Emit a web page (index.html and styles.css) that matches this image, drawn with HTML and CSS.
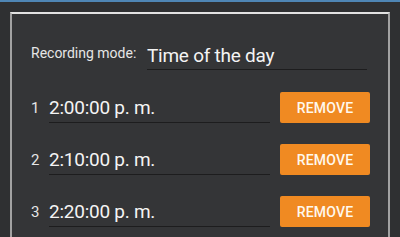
FILE: index.html
```html
<!DOCTYPE html>
<html lang="en">
<head>
  <meta charset="UTF-8">
  <title>Recording schedule</title>
  <link rel="stylesheet" href="styles.css">
</head>
<body>

<div class="topbar"></div>

<div class="container">
  <div class="card">
    <div class="mode-row">
      <span class="mode-label">Recording mode:</span>
      <div class="field mode-field">Time of the day</div>
    </div>

    <div class="time-row">
      <span class="num">1</span>
      <div class="field">2:00:00 p. m.</div>
      <button class="remove">REMOVE</button>
    </div>

    <div class="time-row">
      <span class="num">2</span>
      <div class="field">2:10:00 p. m.</div>
      <button class="remove">REMOVE</button>
    </div>

    <div class="time-row">
      <span class="num">3</span>
      <div class="field">2:20:00 p. m.</div>
      <button class="remove">REMOVE</button>
    </div>
  </div>
</div>

</body>
</html>
```

FILE: styles.css
```css
body {
  margin: 0;
  font-family: Roboto, 'Liberation Sans', sans-serif;
  background-color: #2f3032;
  color: #f2f2f2;
  overflow: hidden;
}

.topbar {
  height: 2px;
  background: #4f86b5;
}

.container {
  padding: 10px 10px 0 10px;
}

.card {
  box-sizing: border-box;
  height: 225px;
  overflow: hidden;
  background: #343537;
  border: 2px solid #a2a2a2;
  border-top-color: #e2e2e2;
  border-bottom: none;
  padding: 25px 18px 0 19px;
}

.mode-row {
  display: flex;
  align-items: flex-end;
  height: 31px;
  margin-bottom: 22px;
}

.mode-label {
  font-size: 14px;
  color: #e6e6e6;
  margin-bottom: 9px;
  width: 116px;
}

.field {
  flex: 1;
  font-size: 19px;
  letter-spacing: -0.25px;
  line-height: 24px;
  padding: 4px 0 2px 0;
  border-bottom: 1px solid #1d1d1e;
  color: #f4f4f4;
}

.mode-field {
  padding: 5px 0 1px 0;
  margin-right: 3px;
}

.time-row {
  display: flex;
  align-items: center;
  height: 31px;
  margin-bottom: 21px;
}

.num {
  width: 18px;
  font-size: 15px;
  color: #e6e6e6;
}

.remove {
  width: 90px;
  height: 31px;
  margin-left: 10px;
  border: none;
  border-radius: 2px;
  background-color: #f08a22;
  color: #fff8ee;
  font-family: Roboto, 'Liberation Sans', sans-serif;
  font-size: 14px;
  font-weight: 500;
  letter-spacing: 0.2px;
  cursor: pointer;
}
```
